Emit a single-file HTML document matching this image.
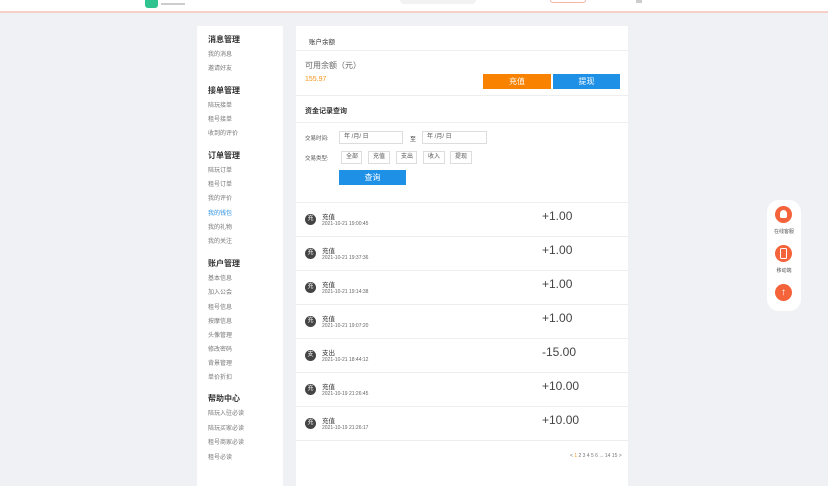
<!DOCTYPE html>
<html><head><meta charset="utf-8"><style>
*{margin:0;padding:0;box-sizing:border-box}
body{width:828px;height:473px;overflow:hidden;background:#f0f1f4;font-family:"Liberation Sans","Noto Sans CJK SC",sans-serif;position:relative;color:#333}
.a{position:absolute}
.top{left:0;top:0;width:828px;height:13px;background:#fff;border-bottom:2px solid #f6cfc8}
.side{left:197px;top:26px;width:86px;height:460px;background:#fff}
.side div{position:absolute;left:11px;font-size:6px;color:#777;white-space:nowrap}
.side .h{font-size:8px;color:#333;font-weight:bold}
.main{left:296px;top:26px;width:332px;height:460px;background:#fff}
.line{position:absolute;left:0;width:332px;height:1px;background:#eee}
.t{position:absolute;white-space:nowrap}
.btn{position:absolute;color:#fff;font-size:8px;text-align:center;line-height:15px}
.inp{position:absolute;height:13px;border:1px solid #ddd;font-size:6px;line-height:11px;padding-left:4px;color:#555}
.row{position:absolute;left:0;width:332px;height:34px;border-bottom:1px solid #eee}
.ic{position:absolute;left:9px;top:11px;width:11px;height:11px;border-radius:50%;background:#444;color:#fff;font-size:6px;line-height:11px;text-align:center}
.rt{position:absolute;left:26px;top:8px;font-size:6.5px;color:#333}
.rd{position:absolute;left:26px;top:18px;font-size:5px;color:#666}
.amt{position:absolute;left:246px;top:6px;font-size:12px;color:#444}
.fl{left:767px;top:200px;width:34px;height:111px;background:#fff;border-radius:12px}
.c{position:absolute;left:8px;width:17px;height:17px;border-radius:50%;background:#f4633a}
.fl .l{position:absolute;width:34px;text-align:center;font-size:5px;color:#555}
</style></head><body>
<div class="a top"></div>
<div class="a" style="left:145px;top:0;width:13px;height:8px;background:#2ec38f;border-radius:0 0 3px 3px"></div>
<div class="a" style="left:161px;top:3px;width:24px;height:2px;background:#ccc"></div>
<div class="a" style="left:400px;top:0;width:76px;height:4px;background:#f2f2f2;border-radius:0 0 4px 4px"></div>
<div class="a" style="left:550px;top:0;width:36px;height:3px;border:1px solid #f5b6a8;border-top:none;border-radius:0 0 4px 4px"></div>
<div class="a" style="left:636px;top:0;width:6px;height:3px;background:#ccc"></div>

<div class="a side">
<div class="h" style="top:8px">消息管理</div>
<div style="top:23px">我的消息</div><div style="top:37px">邀请好友</div>
<div class="h" style="top:59px">接单管理</div>
<div style="top:74px">陪玩接单</div><div style="top:88px">租号接单</div><div style="top:102px">收到的评价</div>
<div class="h" style="top:124px">订单管理</div>
<div style="top:139px">陪玩订单</div><div style="top:153px">租号订单</div><div style="top:167px">我的评价</div>
<div style="top:182px;color:#2a8fe0">我的钱包</div><div style="top:196px">我的礼物</div><div style="top:210px">我的关注</div>
<div class="h" style="top:232px">账户管理</div>
<div style="top:247px">基本信息</div><div style="top:261px">加入公会</div><div style="top:276px">租号信息</div><div style="top:290px">按摩信息</div><div style="top:304px">头像管理</div><div style="top:318px">修改密码</div><div style="top:332px">背景管理</div><div style="top:346px">单价折扣</div>
<div class="h" style="top:367px">帮助中心</div>
<div style="top:382px">陪玩入驻必读</div><div style="top:397px">陪玩买家必读</div><div style="top:411px">租号商家必读</div><div style="top:426px">租号必读</div>
</div>

<div class="a main">
<div class="t" style="left:13px;top:10px;font-size:6.5px">账户余额</div>
<div class="line" style="top:24px"></div>
<div class="t" style="left:9px;top:34px;font-size:8px;color:#666">可用余额（元）</div>
<div class="t" style="left:9px;top:50px;font-size:7px;color:#f7941d">155.97</div>
<div class="btn" style="left:187px;top:48px;width:68px;background:#f98200">充值</div>
<div class="btn" style="left:257px;top:48px;width:67px;background:#1e90e6">提现</div>
<div class="line" style="top:69px"></div>
<div class="t" style="left:9px;top:80px;font-size:7px;font-weight:bold">资金记录查询</div>
<div class="line" style="top:96px"></div>
<div class="t" style="left:9px;top:108px;font-size:5.5px;color:#555">交易时间:</div>
<div class="inp" style="left:43px;top:105px;width:64px">年 /月/ 日</div>
<div class="t" style="left:114px;top:108px;font-size:6px">至</div>
<div class="inp" style="left:126px;top:105px;width:65px">年 /月/ 日</div>
<div class="t" style="left:9px;top:128px;font-size:5.5px;color:#555">交易类型:</div>
<div class="inp" style="left:45px;top:125px;width:21px">全部</div>
<div class="inp" style="left:72px;top:125px;width:22px">充值</div>
<div class="inp" style="left:100px;top:125px;width:21px">支出</div>
<div class="inp" style="left:127px;top:125px;width:22px">收入</div>
<div class="inp" style="left:154px;top:125px;width:22px">提现</div>
<div class="btn" style="left:43px;top:144px;width:67px;background:#1e90e6">查询</div>
<div class="line" style="top:176px"></div>

<div class="row" style="top:177px"><div class="ic">充</div><div class="rt">充值</div><div class="rd">2021-10-21 19:00:45</div><div class="amt">+1.00</div></div>
<div class="row" style="top:211px"><div class="ic">充</div><div class="rt">充值</div><div class="rd">2021-10-21 19:37:36</div><div class="amt">+1.00</div></div>
<div class="row" style="top:245px"><div class="ic">充</div><div class="rt">充值</div><div class="rd">2021-10-21 19:14:38</div><div class="amt">+1.00</div></div>
<div class="row" style="top:279px"><div class="ic">充</div><div class="rt">充值</div><div class="rd">2021-10-21 19:07:20</div><div class="amt">+1.00</div></div>
<div class="row" style="top:313px"><div class="ic">支</div><div class="rt">支出</div><div class="rd">2021-10-21 18:44:12</div><div class="amt">-15.00</div></div>
<div class="row" style="top:347px"><div class="ic">充</div><div class="rt">充值</div><div class="rd">2021-10-19 21:26:45</div><div class="amt">+10.00</div></div>
<div class="row" style="top:381px"><div class="ic">充</div><div class="rt">充值</div><div class="rd">2021-10-19 21:26:17</div><div class="amt">+10.00</div></div>
<div class="t" style="left:274px;top:427px;font-size:5px;color:#777">&lt; <span style="color:#f7941d">1</span> 2 3 4 5 6 ... 14 15 &gt;</div>
</div>

<div class="a fl">
<div class="c" style="top:6px"><div style="position:absolute;left:5px;top:4px;width:7px;height:8px;background:#fff;border-radius:4px 4px 2px 2px"></div></div>
<div class="l" style="top:28px">在线客服</div>
<div class="c" style="top:45px"><div style="position:absolute;left:5px;top:3px;width:7px;height:11px;border:1.2px solid #fff;border-radius:1.5px"></div></div>
<div class="l" style="top:67px">移动端</div>
<div class="c" style="top:84px;color:#fff;font-size:10px;text-align:center;line-height:17px">↑</div>
</div>
</body></html>
